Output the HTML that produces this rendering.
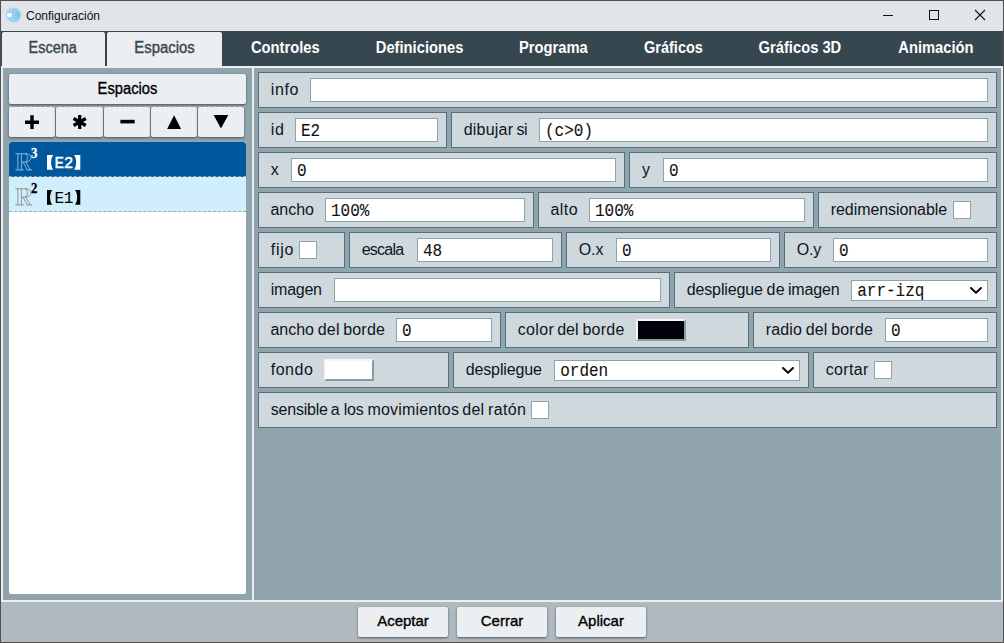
<!DOCTYPE html>
<html><head><meta charset="utf-8"><title>Configuración</title>
<style>
*{box-sizing:border-box;margin:0;padding:0}
html,body{width:1004px;height:643px;overflow:hidden;background:#505050}
body{font-family:"Liberation Sans",sans-serif;font-size:16px;color:#10141c;position:relative}
.abs{position:absolute}
#title{left:1px;top:1px;width:1002px;height:30px;background:#e1e4e9}
#title .t{position:absolute;left:25px;top:8px;font-size:12px;line-height:14px;color:#111}
#tabbar{left:1px;top:31px;width:1002px;height:35px;background:#37474f}
.tab{position:absolute;top:1px;height:34px;line-height:32px;text-align:center;white-space:nowrap;font-size:16px}
.tab.l{background:#eceff1;color:#37474f;border-radius:2px 2px 0 0}
.tab.d{color:#fff;font-weight:bold}
.tab.d .sx{transform:scaleX(.92)}
.tab.lt{color:#37474f;-webkit-text-stroke:.4px #37474f}
.tab.lt .sx{transform:scaleX(.915)}
.hd,.bb{color:#000;-webkit-text-stroke:.35px #000}
.bb{font-size:15px}
.bb span{transform:none!important}
.hd span,.bb span{display:inline-block;transform:scaleX(.92)}
.sx{display:inline-block;transform:scaleX(.92)}
#frame{left:1px;top:66px;width:1002px;height:536px;background:#eceff1}
#lp{left:3px;top:68px;width:249px;height:532px;background:#90a4ae}
#rp{left:254px;top:68px;width:747px;height:532px;background:#90a4ae}
#bot{left:1px;top:602px;width:1002px;height:40px;background:#b0b8c0}
.btn{position:absolute;background:#eceff1;border-radius:2px;box-shadow:0 1px 2.5px rgba(38,50,56,.7);text-align:center;white-space:nowrap}
.box{position:absolute;height:36px;background:#cfd8dc;border:1px solid #546e7a}
.lab{position:absolute;top:0;height:34px;line-height:33px;white-space:nowrap;font-size:16px;color:#10141c}
.w{position:absolute;top:0;height:34px;line-height:33px;white-space:nowrap;font-size:16px;color:#10141c}
.inp{position:absolute;top:5px;height:24px;background:#fff;border:1px solid #8fa3ad;font-family:"Liberation Mono",monospace;font-size:16px;line-height:22px;padding-left:5px;white-space:nowrap;color:#111}
.mt{display:inline-block;line-height:22px;transform-origin:0 15.3px;transform:translateY(1.6px) scaleY(1.09);-webkit-text-stroke:.08px #111}
.chk{position:absolute;top:8px;width:18px;height:18px;background:#fff;border:1px solid #8fa3ad}
.sel{position:absolute;top:7px;height:21px;background:#fff;border:1px solid #8fa3ad;font-family:"Liberation Mono",monospace;font-size:16px;line-height:19px;padding-left:5.2px;white-space:nowrap;color:#111}
.sel .mt{line-height:19px;transform-origin:0 13.8px;transform:translateY(1.6px) scaleY(1.09)}
.chev{position:absolute;right:4.3px;top:5.2px}
.sw{position:absolute;top:6px;width:50px;height:22px;border:2px solid;border-color:#f3f5f6 #8f9ba1 #8f9ba1 #f3f5f6}
.sup{font-family:"Liberation Serif",serif;font-weight:bold;font-size:15px;line-height:14px;transform:scaleX(.85);transform-origin:0 0;-webkit-text-stroke:.3px}
.nm{font-family:"Liberation Mono",monospace;font-size:16px;line-height:18px;letter-spacing:-.4px}
.li{position:absolute;left:9px;width:237px;height:35px;border-bottom:1px dashed #9fa8ad}
</style></head><body>
<div id="title" class="abs">
<svg class="abs" style="left:4px;top:5px" width="18" height="18" viewBox="0 0 18 18"><circle cx="8.3" cy="9" r="7.8" fill="#a9dcf1"/><circle cx="9.5" cy="9" r="5.6" fill="none" stroke="#7fc4ee" stroke-width="1"/><circle cx="10.3" cy="9" r="3.4" fill="none" stroke="#6db6ea" stroke-width="1"/><circle cx="11.2" cy="9" r="1.4" fill="none" stroke="#6db6ea" stroke-width=".9"/><ellipse cx="4.6" cy="9" rx="2.7" ry="2" fill="#fff"/></svg>
<div class="t">Configuración</div>
<svg class="abs" style="left:872px;top:0" width="130" height="30" viewBox="0 0 130 30"><g stroke="#111" stroke-width="1" fill="none" shape-rendering="crispEdges"><path d="M10 14.5h10"/><rect x="56.5" y="9.5" width="9" height="9"/></g><path d="M102 9l10 10M112 9l-10 10" stroke="#111" stroke-width="1.1" fill="none"/></svg>
</div>
<div id="tabbar" class="abs">
<div class="tab l" style="left:1px;width:103px"></div>
<div class="tab l" style="left:106px;width:115px"></div>
<div class="tab lt" style="left:-28.5px;width:160px;background:none"><span class="sx" style="transform:scaleX(.905)">Escena</span></div>
<div class="tab lt" style="left:83.6px;width:160px;background:none"><span class="sx" style="transform:scaleX(.93)">Espacios</span></div>
<div class="tab d" style="left:204.1px;width:160px;background:none"><span class="sx">Controles</span></div>
<div class="tab d" style="left:338.9px;width:160px;background:none"><span class="sx">Definiciones</span></div>
<div class="tab d" style="left:472.7px;width:160px;background:none"><span class="sx">Programa</span></div>
<div class="tab d" style="left:592.0px;width:160px;background:none"><span class="sx" style="transform:scaleX(.905)">Gráficos</span></div>
<div class="tab d" style="left:719.0px;width:160px;background:none"><span class="sx">Gráficos 3D</span></div>
<div class="tab d" style="left:854.6px;width:160px;background:none"><span class="sx">Animación</span></div>
</div>
<div id="frame" class="abs"></div>
<div id="lp" class="abs"></div>
<div id="rp" class="abs"></div>
<div id="bot" class="abs"></div>
<!-- left panel -->
<div class="btn hd abs" style="left:9px;top:74px;width:237px;height:30px;line-height:29px"><span id="hd">Espacios</span></div>
<div class="btn" style="left:9px;top:107px;width:46.25px;height:30px"><svg width="46" height="30" viewBox="0 0 46 30"><path d="M16 15.2h14M23 8.3v13.8" stroke="#000" stroke-width="3.4" fill="none"/></svg></div>
<div class="btn" style="left:56.25px;top:107px;width:46.25px;height:30px"><svg width="46" height="30" viewBox="0 0 46 30"><g stroke="#000" stroke-width="3.3" fill="none"><path d="M23.7 8v14"/><path d="M17.6 11.5l12.2 7"/><path d="M17.6 18.5l12.2 -7"/></g></svg></div>
<div class="btn" style="left:103.5px;top:107px;width:46.25px;height:30px"><svg width="46" height="30" viewBox="0 0 46 30"><path d="M16.4 14.6h14.3" stroke="#000" stroke-width="3.6" fill="none"/></svg></div>
<div class="btn" style="left:150.75px;top:107px;width:46.25px;height:30px"><svg width="46" height="30" viewBox="0 0 46 30"><path d="M16.1 21.9L23.1 8.3L30.1 21.9Z" fill="#000"/></svg></div>
<div class="btn" style="left:198px;top:107px;width:46.25px;height:30px"><svg width="46" height="30" viewBox="0 0 46 30"><path d="M15.6 8L30.3 8L22.95 21.4Z" fill="#000"/></svg></div>
<div class="abs" style="left:9px;top:106px;width:237px;height:0;border-top:1px dashed #a9b8c0;opacity:.85"></div>
<div class="abs" style="left:9px;top:142px;width:237px;height:452px;background:#fff;border-radius:2px"></div>
<div class="li" style="top:142px;background:#01579b;border-radius:3px 3px 0 0"></div>
<div class="li" style="top:177px;background:#d1eefc"></div>
<div class="abs it" style="left:9px;top:142px;width:237px;height:34px;color:#fff"><svg class="abs" style="left:5.5px;top:10.5px" width="19" height="19" viewBox="0 0 19 19" fill="none" stroke="#80b3e2" stroke-width="1" stroke-linecap="square"><path d="M0.8 0.8H11.5M0.8 16.9H8.6M2.9 0.8V16.9M6.4 0.8V16.9"/><path d="M11.3 0.8C14.6 1 15.8 2.9 15.8 4.9C15.8 7.2 14 8.9 10.6 9.1H6.4"/><path d="M10.4 0.9C12 1.7 12.4 3.1 12.4 4.9C12.4 6.8 11.9 8.2 10.6 9.1"/><path d="M7.9 9.1L12.4 16.9M10.7 9.1L15.4 16.9M12.1 16.9H16.8"/></svg><div class="abs sup" style="left:21.6px;top:4px">3</div><svg class="abs" style="left:37.7px;top:13.2px" width="7" height="15" viewBox="0 0 7 15"><path d="M0 0H6.3C3.4 3.6 3.4 11.1 6.3 14.7H0Z" fill="#fff"/></svg><div class="abs nm" style="left:45.6px;top:13px;-webkit-text-stroke:.4px #fff">E2</div><svg class="abs" style="left:65.0px;top:13.2px" width="7" height="15" viewBox="0 0 7 15"><path d="M6.3 0H0C2.9 3.6 2.9 11.1 0 14.7H6.3Z" fill="#fff"/></svg></div>
<div class="abs it" style="left:9px;top:177px;width:237px;height:34px;color:#000"><svg class="abs" style="left:5.5px;top:10.5px" width="19" height="19" viewBox="0 0 19 19" fill="none" stroke="#8b989f" stroke-width="1" stroke-linecap="square"><path d="M0.8 0.8H11.5M0.8 16.9H8.6M2.9 0.8V16.9M6.4 0.8V16.9"/><path d="M11.3 0.8C14.6 1 15.8 2.9 15.8 4.9C15.8 7.2 14 8.9 10.6 9.1H6.4"/><path d="M10.4 0.9C12 1.7 12.4 3.1 12.4 4.9C12.4 6.8 11.9 8.2 10.6 9.1"/><path d="M7.9 9.1L12.4 16.9M10.7 9.1L15.4 16.9M12.1 16.9H16.8"/></svg><div class="abs sup" style="left:21.6px;top:4px">2</div><svg class="abs" style="left:37.7px;top:13.2px" width="7" height="15" viewBox="0 0 7 15"><path d="M0 0H5.3C2.4 3.6 2.4 11.1 5.3 14.7H0Z" fill="#000"/></svg><div class="abs nm" style="left:45.6px;top:13px;-webkit-text-stroke:.1px #000">E1</div><svg class="abs" style="left:66.0px;top:13.2px" width="7" height="15" viewBox="0 0 7 15"><path d="M5.3 0H0C2.9 3.6 2.9 11.1 0 14.7H5.3Z" fill="#000"/></svg></div>
<!-- right panel -->
<div class="box" style="left:258px;top:72px;width:739px"><span class="w" style="left:11.74px;letter-spacing:0.622px">info</span><div class="inp" style="left:51px;width:678px"><span class="mt"></span></div></div>
<div class="box" style="left:258px;top:112px;width:189px"><span class="w" style="left:11.74px;letter-spacing:0.673px">id</span><div class="inp" style="left:36px;width:143px"><span class="mt">E2</span></div></div>
<div class="box" style="left:451px;top:112px;width:546px"><span class="w" style="left:11.73px;letter-spacing:0.213px">dibujar</span><span class="w" style="left:64.43px;letter-spacing:-0.372px">si</span><div class="inp" style="left:87px;width:449px"><span class="mt">(c&gt;0)</span></div></div>
<div class="box" style="left:258px;top:152px;width:367px"><span class="w" style="left:11.87px;letter-spacing:0.000px">x</span><div class="inp" style="left:32px;width:325px"><span class="mt">0</span></div></div>
<div class="box" style="left:629px;top:152px;width:368px"><span class="w" style="left:12.00px;letter-spacing:0.000px">y</span><div class="inp" style="left:33px;width:325px"><span class="mt">0</span></div></div>
<div class="box" style="left:258px;top:192px;width:276px"><span class="w" style="left:11.47px;letter-spacing:-0.041px">ancho</span><div class="inp" style="left:66px;width:200px"><span class="mt">100%</span></div></div>
<div class="box" style="left:538px;top:192px;width:276px"><span class="w" style="left:11.47px;letter-spacing:0.453px">alto</span><div class="inp" style="left:50px;width:216px"><span class="mt">100%</span></div></div>
<div class="box" style="left:818px;top:192px;width:179px"><span class="w" style="left:11.74px;letter-spacing:-0.071px">redimensionable</span><div class="chk" style="left:134px"></div></div>
<div class="box" style="left:258px;top:232px;width:87px"><span class="w" style="left:11.71px;letter-spacing:0.746px">fijo</span><div class="chk" style="left:40px"></div></div>
<div class="box" style="left:349px;top:232px;width:213px"><span class="w" style="left:11.73px;letter-spacing:-0.784px">escala</span><div class="inp" style="left:67px;width:136px"><span class="mt">48</span></div></div>
<div class="box" style="left:566px;top:232px;width:214px"><span class="w" style="left:11.73px;letter-spacing:-0.101px">O.x</span><div class="inp" style="left:49px;width:155px"><span class="mt">0</span></div></div>
<div class="box" style="left:784px;top:232px;width:213px"><span class="w" style="left:11.73px;letter-spacing:-0.230px">O.y</span><div class="inp" style="left:48px;width:155px"><span class="mt">0</span></div></div>
<div class="box" style="left:258px;top:272px;width:412px"><span class="w" style="left:11.74px;letter-spacing:-0.239px">imagen</span><div class="inp" style="left:75px;width:327px"><span class="mt"></span></div></div>
<div class="box" style="left:674px;top:272px;width:323px"><span class="w" style="left:11.73px;letter-spacing:-0.132px">despliegue</span><span class="w" style="left:91.44px;letter-spacing:0.338px">de</span><span class="w" style="left:113.01px;letter-spacing:-0.188px">imagen</span><div class="sel" style="left:176px;width:137px"><span class="mt">arr-izq</span><svg class="chev" width="15" height="9" viewBox="0 0 15 9"><path d="M3 2L8 6.8L13 2" fill="none" stroke="#0a0a0a" stroke-width="2.1" stroke-linecap="round" stroke-linejoin="round"/></svg></div></div>
<div class="box" style="left:258px;top:312px;width:243px"><span class="w" style="left:11.47px;letter-spacing:-0.041px">ancho</span><span class="w" style="left:58.72px;letter-spacing:0.218px">del</span><span class="w" style="left:84.19px;letter-spacing:0.194px">borde</span><div class="inp" style="left:137px;width:96px"><span class="mt">0</span></div></div>
<div class="box" style="left:505px;top:312px;width:244px"><span class="w" style="left:11.73px;letter-spacing:0.346px">color</span><span class="w" style="left:51.19px;letter-spacing:-0.036px">del</span><span class="w" style="left:76.40px;letter-spacing:0.259px">borde</span><div class="sw" style="left:130px;background:#02020a"></div></div>
<div class="box" style="left:753px;top:312px;width:244px"><span class="w" style="left:11.74px;letter-spacing:0.153px">radio</span><span class="w" style="left:51.71px;letter-spacing:0.092px">del</span><span class="w" style="left:77.18px;letter-spacing:0.194px">borde</span><div class="inp" style="left:131px;width:103px"><span class="mt">0</span></div></div>
<div class="box" style="left:258px;top:352px;width:191px"><span class="w" style="left:11.71px;letter-spacing:0.516px">fondo</span><div class="sw" style="left:65px;background:#fff"></div></div>
<div class="box" style="left:453px;top:352px;width:356px"><span class="w" style="left:11.73px;letter-spacing:-0.132px">despliegue</span><div class="sel" style="left:100px;width:246px"><span class="mt">orden</span><svg class="chev" width="15" height="9" viewBox="0 0 15 9"><path d="M3 2L8 6.8L13 2" fill="none" stroke="#0a0a0a" stroke-width="2.1" stroke-linecap="round" stroke-linejoin="round"/></svg></div></div>
<div class="box" style="left:813px;top:352px;width:184px"><span class="w" style="left:11.73px;letter-spacing:0.366px">cortar</span><div class="chk" style="left:60px"></div></div>
<div class="box" style="left:258px;top:392px;width:739px"><span class="w" style="left:11.72px;letter-spacing:-0.213px">sensible</span><span class="w" style="left:71.63px;letter-spacing:0.000px">a</span><span class="w" style="left:84.71px;letter-spacing:-0.180px">los</span><span class="w" style="left:108.60px;letter-spacing:0.151px">movimientos</span><span class="w" style="left:203.36px;letter-spacing:0.218px">del</span><span class="w" style="left:229.08px;letter-spacing:0.352px">ratón</span><div class="chk" style="left:272px"></div></div>
<!-- bottom -->
<div class="btn bb" style="left:358px;top:607px;width:90px;height:30px;line-height:27px"><span id="b1">Aceptar</span></div>
<div class="btn bb" style="left:457px;top:607px;width:90px;height:30px;line-height:27px"><span id="b2">Cerrar</span></div>
<div class="btn bb" style="left:556px;top:607px;width:90px;height:30px;line-height:27px"><span id="b3">Aplicar</span></div>
</body></html>
